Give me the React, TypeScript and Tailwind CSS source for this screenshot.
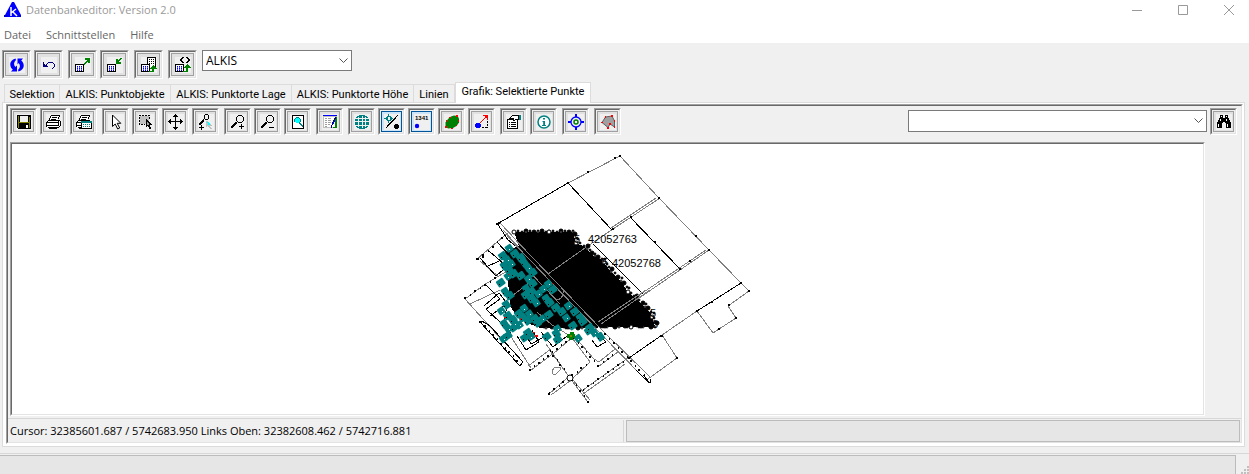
import React from "react";
import clsx from "clsx";

type Point = [number, number];

const pts = (list: Point[]) => list.map((p) => p.join(",")).join(" ");

/* ---------- Icons, all on a 16px grid ---------- */

const Icon: React.FC<{ children: React.ReactNode; smooth?: boolean }> = ({ children, smooth }) => (
  <svg
    width="16"
    height="16"
    viewBox="0 0 16 16"
    fill="none"
    stroke="none"
    shapeRendering={smooth ? "auto" : "crispEdges"}
    aria-hidden="true"
    className="block bg-[#f0f0f0]"
  >
    {children}
  </svg>
);

const tableGrid = (
  <>
    <path d="M0 7h9v8H0z" fill="#000" />
    <path d="M1 8h7v6H1z" fill="#fff" />
    <path d="M2 9h1v1H2zM4 9h1v1H4zM6 9h1v1H6zM2 11h1v1H2zM4 11h1v1H4zM6 11h1v1H6zM2 13h1v1H2zM4 13h1v1H4zM6 13h1v1H6z" fill="#00f" />
    <path d="M2 10h1v1H2zM4 10h1v1H4zM6 10h1v1H6zM2 12h1v1H2zM4 12h1v1H4zM6 12h1v1H6z" fill="#66f" />
  </>
);

const magnifier = (
  <>
    <path d="M8 1h4v1H8zM7 2h1v1H7zM12 2h1v1h-1zM6 3h1v4H6zM13 3h1v4h-1zM7 7h1v1H7zM12 7h1v1h-1zM8 8h4v1H8z" fill="#000" />
    <path d="M6 8h1v1H6zM5 8h2v2H5zM4 9h2v2H4zM3 10h2v2H3zM2 11h2v2H2zM1 12h2v2H1z" fill="#000" />
  </>
);

const printer = (
  <>
    <path d="M5 1h9v1h-1v2h-1v2H3V5h1V3h1z" fill="#fff" />
    <path d="M5 1h9v1H5zM4 2h1v2H4zM13 2h1v1h-1zM6 3h5v1H6zM12 3h1v2h-1zM3 4h1v2H3zM5 5h5v1H5zM2 6h12v1H2z" fill="#000" />
    <path d="M1 7h13v6H1z" fill="#fff" />
    <path d="M1 7h1v1H1zM12 7h1v1h-1zM14 7h1v5h-1zM0 8h13v1H0zM0 9h1v4H0zM12 9h1v2h-1zM1 11h12v1H1zM13 12h1v1h-1zM2 13h11v1H2zM3 14h8v1H3z" fill="#000" />
  </>
);

const icons = {
  refresh: (
    <Icon smooth>
      <path d="M6.500 1.500C3 2.500 1 5 1.300 8c.2 2 1.200 3.500 2.500 4.500L2 14.500h6V8.500L6.300 10C4.500 8 4.600 5 7 3z" fill="#00f" />
      <path d="M9.500 14.500C13 13.500 15 11 14.700 8c-.2-2-1.200-3.500-2.500-4.500L14 1.500H8.500v6L9.700 6c1.800 2 1.700 5-.7 7z" fill="#00f" />
    </Icon>
  ),
  undo: (
    <Icon>
      <path d="M2 5h1v4h4v1H2z" fill="#000080" />
      <path d="M3 8h3v1H3zM5 7h1v1H5zM6 6h1v1H6zM7 5h5v1H7zM12 6h1v1h-1zM13 7h1v3h-1zM12 10h1v1h-1zM11 11h1v1h-1zM3 7h1v1H3z" fill="#000080" />
    </Icon>
  ),
  exportTable: (
    <Icon>
      {tableGrid}
      <path d="M10 1h5v5h-2V5h-1v1h-1v1h-1v1H9V6h1V5h1V4h1V3h-2z" fill="#008000" />
    </Icon>
  ),
  importTable: (
    <Icon>
      {tableGrid}
      <path d="M13 1h2v1h-1v1h-1v1h-1v1h2v2H9V2h2v1h1V2h1z" fill="#008000" />
    </Icon>
  ),
  tableStack: (
    <Icon>
      <path d="M6 0h9v12H6z" fill="#000" />
      <path d="M7 1h7v10H7z" fill="#fff" />
      <path d="M8 2h1v1H8zM10 2h1v1h-1zM12 2h1v1h-1zM8 4h1v1H8zM10 4h1v1h-1zM12 4h1v1h-1zM8 6h1v1H8zM10 6h1v1h-1zM12 6h1v1h-1zM12 8h1v1h-1z" fill="#000" />
      {tableGrid}
      <path d="M12 8h1v1h1v1h1v1h1v1h-3v3H8v-1h3v-2H9v-1h1v-1h1V9h1z" fill="#008000" />
    </Icon>
  ),
  tableCode: (
    <Icon>
      {tableGrid}
      <path d="M7 0h2v1H8v1H7v2h1v1h1v1H7V5H6V4H5V2h1V1h1zM11 0h2v1h1v1h1v2h-1v1h-1v1h-2V5h1V4h1V2h-1V1h-1z" fill="#000" />
      <path d="M12 7h1v1h1v1h1v1h1v1h-3v4H8v-1h3v-3H9v-1h1V9h1V8h1z" fill="#008000" />
    </Icon>
  ),
  save: (
    <Icon>
      <path d="M1 1h14v14H2v-1H1z" fill="#000" />
      <path d="M2 2h1v12H2zM13 3h1v11h-1zM3 8h10v1H3z" fill="#808000" />
      <path d="M4 2h8v6H4z" fill="#f0f0f0" />
      <path d="M10 11h2v3h-2z" fill="#fff" />
    </Icon>
  ),
  print: <Icon>{printer}</Icon>,
  printSetup: (
    <Icon>
      {printer}
      <path d="M5 7h11v2H5z" fill="#008080" />
      <path d="M5 9h11v6H5z" fill="#000" />
      <path d="M6 9h9v5H6z" fill="#fff" />
      <path d="M7 10h1v1H7zM9 10h1v1H9zM11 10h1v1h-1zM13 10h1v1h-1zM7 12h1v1H7zM9 12h1v1H9zM11 12h1v1h-1zM13 12h1v1h-1z" fill="#008080" />
    </Icon>
  ),
  pointer: (
    <Icon smooth>
      <path d="M4.500 1v11.500l2.700-2.500 2.500 5 2-1-2.500-4.700h3.600z" fill="#fff" stroke="#000" />
    </Icon>
  ),
  selectRect: (
    <Icon>
      <path d="M2 2h9v8H2z" fill="#c0c0c0" />
      <path d="M1 1h2v1H1zM4 1h2v1H4zM7 1h2v1H7zM10 1h2v1h-2zM1 3h1v2H1zM1 6h1v2H1zM1 9h1v2H1zM11 3h1v2h-1zM3 10h2v1H3zM6 10h1v1H6z" fill="#000" />
      <path d="M8 5h1v1h1v1h1v1h1v1h1v1h1v1h-2v2h1v2h-2v-2h-1v-1H9v1H8z" fill="#000" />
      <path d="M9 7v4h2V9h-1V8H9z" fill="#a0a0a0" />
    </Icon>
  ),
  move: (
    <Icon>
      <path d="M7 2h1v12H7zM1 7h13v1H1z" fill="#000" />
      <path d="M7 0h1v1h1v1h1v1H5V2h1V1h1zM5 13h5v1H9v1H8v1H7v-1H6v-1H5zM0 7h1V6h1V5h1v5H2V9H1V8H0zM15 7h-1V6h-1V5h-1v5h1V9h1V8h1z" fill="#000" />
    </Icon>
  ),
  zoomPointer: (
    <Icon>
      <path d="M7 0h3v1H7zM6 1h1v4H6zM10 1h1v4h-1zM7 5h3v1H7zM5 5h1v2H5zM4 6h2v2H4zM3 7h2v2H3zM2 8h2v2H2zM1 9h2v2H1z" fill="#000" />
      <path d="M3 11h1v5H3zM1 13h5v1H1z" fill="#000" />
      <path d="M8 7h2v1h1v1h1v1h1v1h1v1h-2v1h1v1h1v1h-2v-1h-1v-1h-1v-1H9v1H8z" fill="#c0c0c0" />
      <path d="M9 8h2v1H9zM10 9h2v2h-2z" fill="#0ff" />
    </Icon>
  ),
  zoomIn: (
    <Icon>
      {magnifier}
      <path d="M11 10h1v5h-1zM9 12h5v1H9z" fill="#000" />
    </Icon>
  ),
  zoomOut: (
    <Icon>
      {magnifier}
      <path d="M9 13h5v1H9z" fill="#000" />
    </Icon>
  ),
  zoomPage: (
    <Icon>
      <path d="M2 1h12v14H2z" fill="#000" />
      <path d="M3 2h10v12H3z" fill="#fff" />
      <path d="M6 4h3v1h1v3H9v1H6V8H5V5h1z" fill="#0ff" />
      <path d="M6 3h3v1h1v1h1v3h-1v1h1v1h1v1h1v2h-1v-1h-1v-1h-1v-1H9V9H6V8H5V5h1V4h3v1h1v3H9v1H6V8H4V5h1V4h1z" fill="#008080" fillRule="evenodd" />
    </Icon>
  ),
  editTable: (
    <Icon>
      <path d="M1 2h14v12H1z" fill="#c0c0c0" />
      <path d="M2 3h12v10H2z" fill="#fff" />
      <path d="M1 1h14v1H1z" fill="#00f" />
      <path d="M3 4h2v1H3zM6 4h3v1H6zM3 6h2v1H3zM6 6h3v1H6zM3 8h2v1H3zM6 8h3v1H6zM3 10h2v1H3zM6 10h2v1H6zM3 12h2v1H3z" fill="#a0a0a0" />
      <path d="M13 3h2v11h-4v-1h2z" fill="#008000" />
      <path d="M13 3h1v2h-1v2h-1v2h-1v2h-1v3H9v-3h1V8h1V6h1V4h1z" fill="#000080" />
      <path d="M12 6h1v2h-1v2h-1V8h1z" fill="#00f" />
    </Icon>
  ),
  globe: (
    <Icon>
      <path d="M5 1h6v1h2v1h1v2h1v6h-1v2h-1v1h-2v1H5v-1H3v-1H2v-2H1V5h1V3h1V2h2z" fill="#008080" />
      <path d="M4 3h1v10H4zM8 2h1v12H8zM11 3h1v10h-1zM2 4h12v1H2zM1 7h14v1H1zM2 11h12v1H2z" fill="#f0f0f0" />
    </Icon>
  ),
  pointSymbol: (
    <Icon>
      <path d="M3 2h4v1h1v3H7v1H3V6H2V3h1zM4 3v3h2V3z" fill="#008080" fillRule="evenodd" />
      <path d="M4 0h1v2H4zM4 7h1v2H4zM0 4h2v1H0zM8 4h1v1H8z" fill="#008080" />
      <path d="M14 1L2 14" stroke="#000" strokeWidth="1.200" />
      <path d="M11 10h3v1h1v3h-1v1h-3v-1h-1v-3h1z" fill="#000" />
    </Icon>
  ),
  pointNumber: (
    <Icon smooth>
      <text x="1" y="6" fill="#000" fontSize="6" fontWeight="bold" fontFamily="'Liberation Sans', sans-serif">
        1341
      </text>
      <circle cx="3" cy="12" r="2.200" fill="#00f" />
    </Icon>
  ),
  area: (
    <Icon smooth>
      <path d="M7 2.500l3-1 3.500.5L15 4.500v4L12.500 12 9 14l-5 .5-2.500-2v-4L4 5z" fill="#008000" />
      <path d="M12 1h2v2h-2zM14 6h1v2h-1zM5 3h2v1H5zM2 6h1v2H2zM1 12h2v2H1zM7 14h2v1H7zM12 11h1v1h-1z" fill="red" />
    </Icon>
  ),
  moveVector: (
    <Icon>
      <path d="M2 9h4v1h1v3H6v1H2v-1H1v-3h1z" fill="#00f" />
      <path d="M6 8h1v1H6zM7 7h1v1H7zM8 6h1v1H8zM9 5h1v1H9zM10 4h1v1h-1zM11 3h1v1h-1zM9 1h5v5h-1V4h-1V3h-1V2H9z" fill="red" />
      <path d="M13 7h1v2h-1zM13 10h1v2h-1zM8 13h2v1H8zM11 13h3v1h-3z" fill="#000" />
    </Icon>
  ),
  properties: (
    <Icon>
      <path d="M1 5h11v10H1z" fill="#000" />
      <path d="M2 6h9v8H2z" fill="#fff" />
      <path d="M3 8h1v1H3zM5 8h5v1H5zM3 10h1v1H3zM5 10h5v1H5zM3 12h1v1H3zM5 12h5v1H5z" fill="#000" />
      <path d="M6 1h7v5H9v1H7V6H3V4h1V3h1V2h1z" fill="#000" />
      <path d="M6 2h6v3H9v1H8V4H5V3h1z" fill="#fff" />
      <path d="M13 1h2v5h-2z" fill="#008080" />
    </Icon>
  ),
  info: (
    <Icon smooth>
      <circle cx="8" cy="8" r="6" fill="#fff" stroke="#008080" strokeWidth="1.500" />
      <path d="M7 4h2v1.500H7zM6.500 7H9v4h1v1H6v-1h1.200V8h-.7z" fill="#008080" />
    </Icon>
  ),
  target: (
    <Icon smooth>
      <path d="M7 0h2v3H7zM7 13h2v3H7zM0 7h3v2H0zM13 7h3v2h-3z" fill="#00f" />
      <circle cx="8" cy="8" r="5" stroke="#00f" strokeWidth="1.300" />
      <circle cx="8" cy="8" r="2" fill="#fff" stroke="#008000" strokeWidth="1.500" />
    </Icon>
  ),
  polygon: (
    <Icon smooth>
      <path d="M2 8.500L5.500 3 12 2l2.500 5v6L10 10l-2 3.500z" fill="#a0a0a0" stroke="#606060" />
      <path d="M5 2h1v2H5zM11 1h2v2h-2zM14 6h1v2h-1zM14 12h1v2h-1zM7 13h2v2H7zM1 8h2v1H1zM9 9h2v2H9z" fill="red" />
    </Icon>
  ),
  binoculars: (
    <Icon>
      <path d="M4 1h3v3h2V1h3v3h1v2h1v2h1v6h-5V9H9V8H7v1H6v5H1V8h1V6h1V4h1z" fill="#000" />
      <path d="M5 2h1v1H5zM10 2h1v1h-1zM4 5h1v2H4zM10 5h1v2h-1zM2 10h1v3H2zM11 10h1v3h-1z" fill="#fff" />
    </Icon>
  ),
};

type IconName = keyof typeof icons;

/* ---------- Controls ---------- */

const sunkenOuter = "border border-t-[#a0a0a0] border-l-[#a0a0a0] border-r-white border-b-white";
const sunkenInner = "border border-t-[#696969] border-l-[#696969] border-r-[#e3e3e3] border-b-[#e3e3e3]";

const ToolButton: React.FC<{ icon: IconName; label: string; large?: boolean; active?: boolean }> = ({
  icon,
  label,
  large,
  active,
}) => (
  <div className={clsx("shrink-0", sunkenOuter, large ? "size-[29px]" : "size-[27px]")}>
    <div className={clsx("size-full p-px", sunkenInner)}>
      <button
        type="button"
        title={label}
        aria-label={label}
        aria-pressed={active}
        className={clsx(
          "flex size-full items-center justify-center border",
          active ? "border-[#005499] bg-[#cce4f7]" : "border-[#a0a0a0] bg-[#e1e1e1]"
        )}
      >
        {icons[icon]}
      </button>
    </div>
  </div>
);

const Combo: React.FC<{ label: string; options: string[]; className?: string }> = ({ label, options, className }) => (
  <div className={clsx("relative", className)}>
    <select aria-label={label} className="block size-full appearance-none border border-[#7a7a7a] bg-white pl-[3px] text-xs text-black">
      {options.map((o) => (
        <option key={o}>{o}</option>
      ))}
    </select>
    <svg width="9" height="6" viewBox="0 0 9 6" fill="none" stroke="#555" className="pointer-events-none absolute top-2 right-1" aria-hidden="true">
      <path d="M.5.5l4 4 4-4" />
    </svg>
  </div>
);

const mainTools: { icon: IconName; label: string }[][] = [
  [
    { icon: "refresh", label: "Aktualisieren" },
    { icon: "undo", label: "Rückgängig" },
  ],
  [
    { icon: "exportTable", label: "Exportieren" },
    { icon: "importTable", label: "Importieren" },
  ],
  [{ icon: "tableStack", label: "Tabellen laden" }],
  [{ icon: "tableCode", label: "XML laden" }],
];

const graphicTools: { icon: IconName; label: string; active?: boolean }[][] = [
  [
    { icon: "save", label: "Speichern" },
    { icon: "print", label: "Drucken" },
    { icon: "printSetup", label: "Drucker einrichten" },
  ],
  [
    { icon: "pointer", label: "Zeiger" },
    { icon: "selectRect", label: "Auswahl" },
    { icon: "move", label: "Verschieben" },
    { icon: "zoomPointer", label: "Zoom" },
  ],
  [
    { icon: "zoomIn", label: "Vergrößern" },
    { icon: "zoomOut", label: "Verkleinern" },
    { icon: "zoomPage", label: "Gesamtansicht" },
  ],
  [{ icon: "editTable", label: "Bearbeiten" }],
  [
    { icon: "globe", label: "Hintergrundkarte" },
    { icon: "pointSymbol", label: "Punktsymbole", active: true },
    { icon: "pointNumber", label: "Punktnummern", active: true },
    { icon: "area", label: "Flächen" },
    { icon: "moveVector", label: "Vektoren" },
  ],
  [
    { icon: "properties", label: "Eigenschaften" },
    { icon: "info", label: "Information" },
  ],
  [{ icon: "target", label: "Zentrieren" }],
  [{ icon: "polygon", label: "Polygon" }],
];

const tabs = [
  { title: "Selektion", width: "w-14" },
  { title: "ALKIS: Punktobjekte", width: "w-[111px]" },
  { title: "ALKIS: Punktorte Lage", width: "w-[121px]" },
  { title: "ALKIS: Punktorte Höhe", width: "w-[122px]" },
  { title: "Linien", width: "w-[41px]" },
  { title: "Grafik: Selektierte Punkte", width: "w-[136px]", active: true },
];

/* ---------- Map ---------- */

const grayLines: Point[][] = [
  [[568, 183], [620, 156], [659, 198], [709, 250], [741, 283], [749, 291], [728, 306], [736, 318], [713, 333], [697, 311], [662, 335], [677, 358], [648, 379]],
  [[660, 198], [613, 229], [585, 248], [548, 274]],
  [[656, 198], [611, 228]],
  [[709, 250], [600, 325]],
  [[706, 250], [598, 323]],
  [[500, 223], [548, 274], [601, 329], [650, 377]],
  [[503, 230], [545, 276], [598, 331], [646, 380]],
  [[465, 299], [484, 285], [512, 268]],
  [[465, 299], [483, 319], [500, 338]],
  [[470, 304], [500, 290]],
  [[477, 259], [497, 242], [509, 232]],
  [[480, 261], [499, 277]],
  [[530, 371], [554, 353], [573, 337]],
  [[528, 366], [551, 349]],
  [[546, 344], [567, 374]],
  [[551, 352], [570, 378], [588, 402]],
  [[573, 380], [590, 400]],
  [[549, 394], [567, 378]],
  [[551, 395], [570, 381], [590, 362], [573, 339]],
  [[575, 337], [594, 359], [599, 362], [615, 349]],
  [[598, 367], [619, 351]],
  [[583, 390], [628, 358]],
  [[583, 394], [625, 364]],
  [[508, 332], [531, 368]],
];

const blackLines: Point[][] = [
  [[497, 224], [568, 183], [612, 230]],
  [[630, 217], [680, 269]],
  [[593, 244], [642, 293]],
  [[741, 283], [697, 311]],
  [[662, 335], [629, 358]],
  [[497, 223], [508, 240], [520, 249]],
  [[482, 321], [490, 326], [523, 362], [520, 366], [480, 322]],
  [[485, 284], [500, 299], [486, 309], [500, 322]],
  [[497, 242], [510, 256], [486, 267]],
  [[480, 258], [496, 276], [503, 270]],
  [[489, 251], [504, 264]],
  [[484, 306], [499, 293], [506, 302]],
  [[490, 316], [508, 303], [503, 324], [511, 333]],
  [[517, 336], [526, 350], [539, 342], [532, 330]],
  [[524, 332], [531, 344], [546, 336]],
  [[541, 332], [553, 347], [571, 333]],
  [[592, 340], [597, 347], [606, 342], [598, 333]],
  [[643, 375], [650, 383], [651, 379]],
  [[636, 370], [649, 383]],
];

// Roads that carry a boundary mark every few metres
const markedLines: Point[][] = [
  [[549, 394], [568, 379], [590, 363]],
  [[572, 381], [588, 402]],
  [[530, 371], [570, 339]],
  [[583, 391], [628, 359]],
  [[574, 339], [598, 367], [617, 352]],
  [[465, 299], [500, 276]],
  [[478, 260], [507, 235]],
  [[481, 323], [521, 366]],
  [[550, 352], [567, 375]],
  [[605, 335], [648, 380]],
];

const marks: Point[] = [
  [497, 224], [568, 183], [588, 172], [615, 158], [620, 156], [659, 198], [631, 217], [613, 229], [655, 242], [680, 269], [690, 261],
  [696, 236], [709, 250], [642, 293], [741, 283], [749, 291], [729, 305], [736, 318], [719, 329], [712, 302], [697, 311], [662, 336],
  [677, 358], [629, 358], [477, 259], [483, 257], [480, 322], [499, 223], [549, 394], [588, 402],
];

const cloud: Point[] = [
  [514, 232], [573, 232], [576, 243], [585, 247], [592, 255], [602, 260], [611, 272], [621, 281], [628, 292], [636, 299], [645, 307],
  [651, 314], [655, 327], [540, 328], [530, 324], [518, 318], [510, 306], [509, 290], [507, 276], [505, 252], [519, 246],
];

const buildings: Point[] = [
  [509, 249], [515, 254], [503, 256], [508, 260], [504, 266], [509, 270], [512, 264], [521, 258], [524, 263], [529, 268], [533, 273],
  [501, 283], [508, 277], [514, 274], [521, 276], [529, 279], [505, 292], [510, 296], [502, 311], [508, 316], [504, 324], [509, 329],
  [513, 320], [519, 314], [524, 309], [526, 295], [532, 299], [537, 303], [526, 289], [533, 284], [530, 314], [535, 319], [527, 321],
  [520, 325], [514, 328], [508, 336], [515, 324], [523, 318], [532, 292], [539, 294], [546, 299], [550, 303], [549, 284], [553, 290],
  [537, 323], [543, 319], [549, 315], [528, 333], [531, 337], [525, 338], [547, 337], [558, 329], [556, 334], [558, 340], [569, 306],
  [575, 312], [580, 318], [567, 318], [562, 312], [573, 326], [578, 339], [583, 322], [590, 328], [595, 333], [600, 337], [589, 331],
  [544, 289], [556, 308], [506, 305], [504, 339],
];

const spread = (line: Point[], step: number): Point[] => {
  const out: Point[] = [];
  for (let i = 1; i < line.length; i++) {
    const [x1, y1] = line[i - 1];
    const [x2, y2] = line[i];
    const count = Math.max(1, Math.round(Math.hypot(x2 - x1, y2 - y1) / step));
    for (let k = 0; k < count; k++) {
      out.push([Math.round(x1 + ((x2 - x1) * k) / count), Math.round(y1 + ((y2 - y1) * k) / count)]);
    }
  }
  return out;
};

const MapDrawing: React.FC = () => (
  <svg width="294" height="270" viewBox="461 144 294 270" shapeRendering="crispEdges" role="img" aria-label="Selektierte Punkte" className="block">
    <g fill="none" stroke="#808080">
      {grayLines.map((line, i) => (
        <polyline key={i} points={pts(line)} />
      ))}
    </g>
    <g fill="none" stroke="#000">
      {blackLines.map((line, i) => (
        <polyline key={i} points={pts(line)} />
      ))}
    </g>
    <polygon points={pts(cloud)} fill="#000" />
    {/* overlapping point symbols leave a ragged rim */}
    <g stroke="#000" shapeRendering="auto">
      {spread(cloud.slice(0, 14), 3).map(([x, y], i) => (
        <circle key={i} cx={x + ((i * 5) % 4)} cy={y - (i % 2)} r={i % 3 ? 1 : 2} fill={i % 4 ? "#000" : "#fff"} />
      ))}
    </g>
    <g fill="#000">
      {marks.map(([x, y], i) => (
        <rect key={i} x={x - 1} y={y - 1} width="2" height="2" />
      ))}
      {markedLines.flatMap((line) => spread(line, 6)).map(([x, y], i) => (
        <rect key={i} x={x - (i % 2)} y={y - 2} width={1 + (i % 2)} height="2" />
      ))}
    </g>
    <g fill="none" stroke="#808080">
      <path d="M585 248L548 274M601 324L650 290M598 322L646 290M510 234L601 329M507 236L598 331" />
      <path d="M507 300L530 282M520 262L545 288L560 304M537 312L552 325L572 337M556 300q8-1 7-9" />
    </g>
    <g fill="#008080" shapeRendering="auto">
      {buildings.map(([x, y], i) => (
        <rect
          key={i}
          x={x - 4}
          y={y - 4}
          width={i % 3 ? 8 : 7}
          height="7"
          rx="1"
          transform={`rotate(${i % 4 === 0 ? 55 : -35} ${x} ${y})`}
        />
      ))}
    </g>
    <g fill="#f0f0f0">
      {buildings.filter((_, i) => i % 3 === 0).map(([x, y], i) => (
        <rect key={i} x={x} y={y} width="1" height="1" />
      ))}
    </g>
    <g fill="#000">
      {buildings.filter((_, i) => i % 3 !== 0).map(([x, y], i) => (
        <rect key={i} x={x - 2} y={y + 1} width="1" height="1" />
      ))}
    </g>
    <path d="M567 334h3v-2h4v2h1v4h-2v2h-4v-2h-2z" fill="#008000" />
    <path d="M570 335h2v2h-2z" fill="#808000" />
    <path d="M535 335h3v2h-3zM533 332h2v1h-2zM504 317h2v1h-2zM520 318h1v2h-1zM552 283h1v1h-1zM508 274h1v1h-1z" fill="red" />
    <path d="M552 371l3-4h5v3l-4 4h-3z" fill="#fff" stroke="#808080" />
    <circle cx="570" cy="378" r="3" fill="#fff" stroke="#000" shapeRendering="auto" />
    <g fontFamily="'Liberation Sans', sans-serif" fontSize="11" fill="#000">
      <text x="588" y="243">42052763</text>
      <text x="612" y="267">42052768</text>
      <text x="602" y="266">5</text>
      <text x="574" y="243">5</text>
      <text x="650" y="317">5</text>
      <text x="652" y="328">8</text>
    </g>
  </svg>
);

/* ---------- Window ---------- */

const captionButton = "flex h-5 w-10 items-center justify-center";

const TitleBar: React.FC = () => (
  <header className="flex h-5 items-center bg-white pl-1">
    <svg width="18" height="16" viewBox="0 0 18 16" aria-hidden="true">
      <path d="M8 0h2l7 13v2H1v-2z" fill="#00f" />
      <path d="M7 5v9M12 7l-5 4M9 10l4 4" stroke="#fff" strokeWidth="1.500" fill="none" />
      <path d="M0 13h3v2H0zM15 13h2v2h-2z" fill="#00c" />
    </svg>
    <h1 className="ml-1 text-[#999]">Datenbankeditor: Version 2.0</h1>
    <div className="ml-auto flex gap-[6px]">
      <button type="button" aria-label="Minimieren" className={captionButton}>
        <svg width="10" height="10" stroke="#999" aria-hidden="true"><path d="M0 5.500h10" /></svg>
      </button>
      <button type="button" aria-label="Maximieren" className={captionButton}>
        <svg width="10" height="10" stroke="#999" fill="none" aria-hidden="true"><path d="M.5.5h9v9h-9z" /></svg>
      </button>
      <button type="button" aria-label="Schließen" className={captionButton}>
        <svg width="10" height="10" stroke="#999" aria-hidden="true"><path d="M0 0l10 10M10 0L0 10" /></svg>
      </button>
    </div>
  </header>
);

const App: React.FC = () => {
  return (
    <div className="flex min-h-screen flex-col bg-[#f0f0f0] font-['Open_Sans','Noto_Sans',sans-serif] text-[11px] text-black">
      <TitleBar />
      <nav className="flex h-[23px] items-center gap-[15px] bg-white pt-2 pl-1 text-[#666]">
        <button type="button">Datei</button>
        <button type="button">Schnittstellen</button>
        <button type="button">Hilfe</button>
      </nav>

      <div className="flex items-start gap-[5px] pt-[7px] pl-[2px]">
        {mainTools.map((group, i) => (
          <div key={i} className="flex gap-[3px]">
            {group.map((tool) => (
              <ToolButton key={tool.icon} large {...tool} />
            ))}
          </div>
        ))}
        <Combo label="Datenmodell" options={["ALKIS"]} className="h-[21px] w-[150px]" />
      </div>

      <div role="tablist" className="relative z-10 -mb-px flex items-end pt-[3px] pl-1 font-['Roboto',sans-serif]">
        {tabs.map((tab) => (
          <button
            key={tab.title}
            type="button"
            role="tab"
            aria-selected={!!tab.active}
            className={clsx(
              "border-t border-r border-[#dcdcdc] text-center whitespace-nowrap",
              tab.width,
              tab.active ? "h-[21px] border-l bg-white pb-[2px]" : "h-[19px] border-b pt-[2px] first:border-l"
            )}
          >
            {tab.title}
          </button>
        ))}
      </div>

      <main className="mr-1 ml-[2px] flex flex-1 flex-col border border-[#dcdcdc] bg-white pt-px pr-px pb-[2px] pl-[3px]">
        <div className={clsx("flex flex-1 flex-col bg-[#f0f0f0]", sunkenOuter)}>
          <div className={clsx("flex flex-1 flex-col", sunkenInner)}>
            <div className="flex items-start gap-[5px] pt-[2px] pr-1 pl-[2px]">
              {graphicTools.map((group, i) => (
                <div key={i} className="flex gap-[3px]">
                  {group.map((tool) => (
                    <ToolButton key={tool.icon} {...tool} />
                  ))}
                </div>
              ))}
              <div className="ml-auto flex gap-[3px]">
                <Combo label="Suche" options={[""]} className="mt-[2px] h-[22px] w-[299px]" />
                <ToolButton icon="binoculars" label="Suchen" />
              </div>
            </div>

            <div className={clsx("mt-[7px] mr-[36px] ml-[2px] flex flex-1", sunkenOuter)}>
              <div className={clsx("flex flex-1 items-center justify-center bg-white", sunkenInner)}>
                <MapDrawing />
              </div>
            </div>

            <footer className="mt-[2px] flex h-6 items-stretch border-t border-[#d7d7d7] pt-px">
              <p className="flex-1 border-r border-[#d7d7d7] pl-[2px] leading-[22px] whitespace-nowrap">
                Cursor: 32385601.687 / 5742683.950 Links Oben: 32382608.462 / 5742716.881
              </p>
              <div role="progressbar" aria-label="Fortschritt" className="mr-px ml-[2px] flex-1 border border-[#bcbcbc] bg-[#e6e6e6]" />
            </footer>
          </div>
        </div>
      </main>

      <div className="mt-[6px] flex h-[22px] items-end border-t border-[#d7d7d7] pt-px">
        <div role="progressbar" aria-label="Gesamtfortschritt" className="h-5 flex-1 border border-b-0 border-l-0 border-[#bcbcbc] bg-[#e6e6e6]" />
        <svg width="13" height="13" viewBox="0 0 13 13" fill="#bfbfbf" shapeRendering="crispEdges" aria-hidden="true">
          <path d="M11 4h2v2h-2zM8 7h2v2H8zM11 7h2v2h-2zM5 10h2v2H5zM8 10h2v2H8zM11 10h2v2h-2z" />
        </svg>
      </div>
    </div>
  );
};

export default App;
